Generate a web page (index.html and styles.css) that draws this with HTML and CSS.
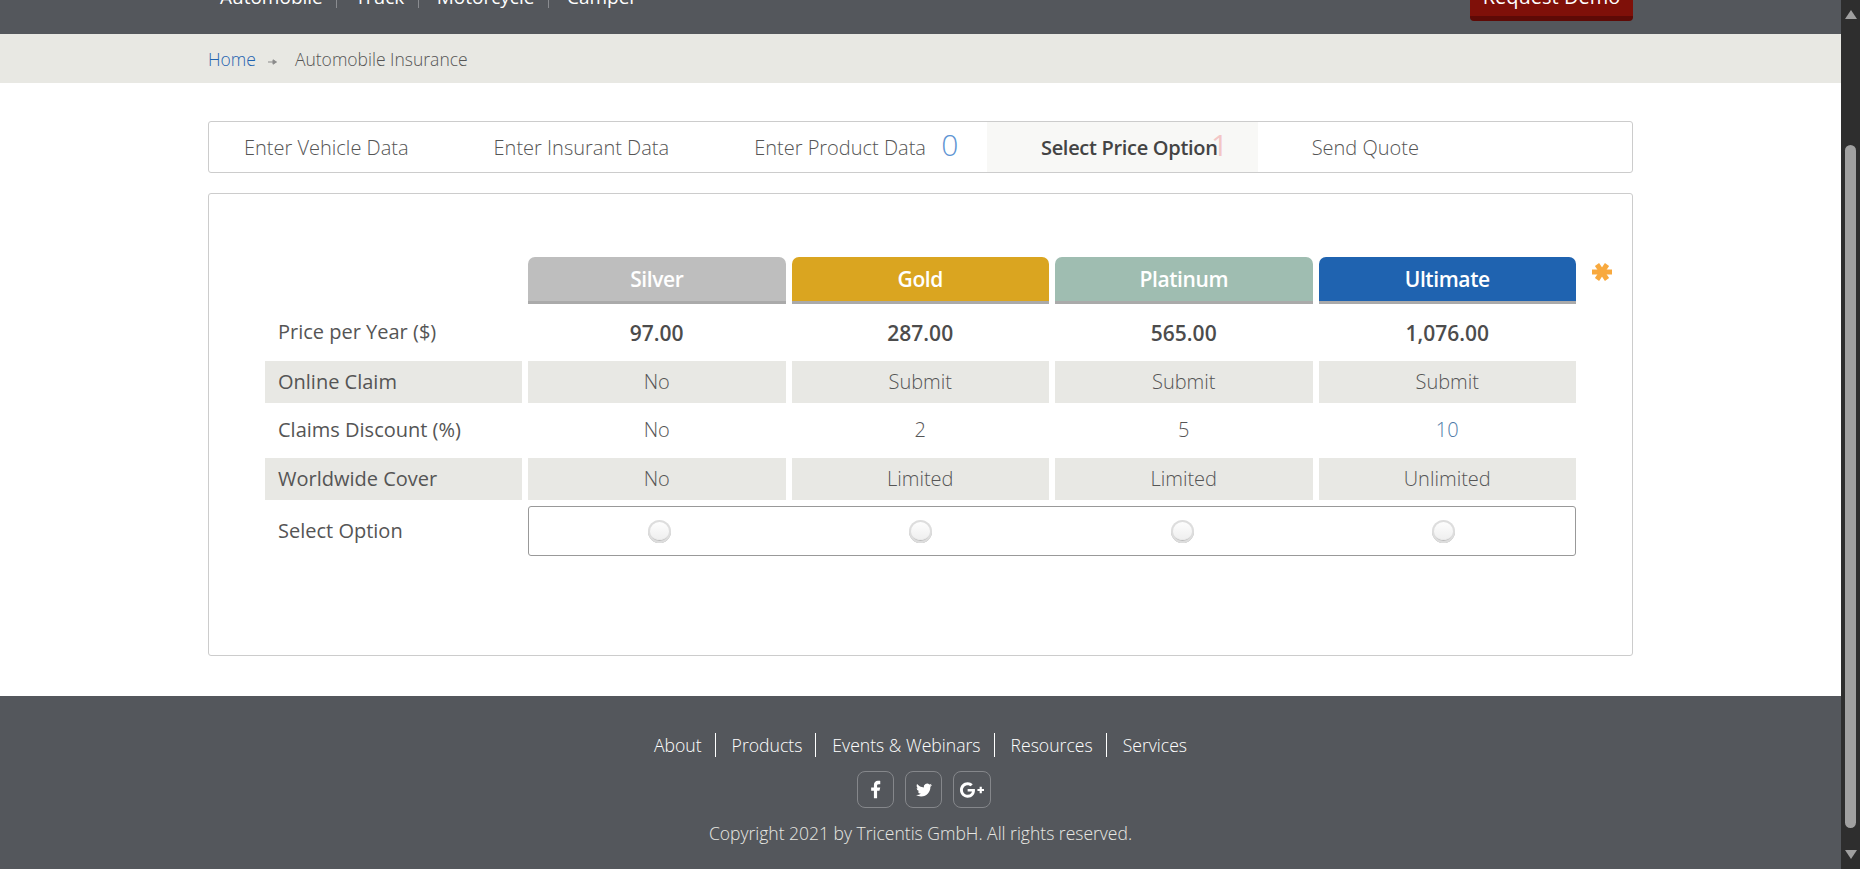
FILE: index.html
```html
<!DOCTYPE html>
<html lang="en">
<head>
  <meta charset="UTF-8" />
  <meta name="viewport" content="width=device-width, initial-scale=1.0" />
  <title>Automobile Insurance</title>
  <link rel="stylesheet" href="styles.css">
</head>
<body>
  <div class="page">
    <header class="topbar">
      <div class="wrap topbar-inner">
        <nav class="topnav">
          <a class="topnav-link">Automobile</a>
          <a class="topnav-link">Truck</a>
          <a class="topnav-link">Motorcycle</a>
          <a class="topnav-link">Camper</a>
        </nav>
        <a class="demo-btn">Request Demo</a>
      </div>
    </header>

    <div class="crumbs">
      <div class="wrap crumbs-inner">
        <a class="crumb-home">Home</a>
        <svg class="crumb-arrow" width="9" height="6" viewBox="0 0 9 6"><path d="M0 3h6.5M5 .8 8.5 3 5 5.2z" fill="#8b8b8b" stroke="#8b8b8b"/></svg>
        <span class="crumb-current">Automobile Insurance</span>
      </div>
    </div>

    <main class="wrap content">
      <div class="tabs">
        <a class="tab tab-vehicle">Enter Vehicle Data</a>
        <a class="tab tab-insurant">Enter Insurant Data</a>
        <a class="tab tab-product">Enter Product Data<span class="count count-zero">0</span></a>
        <a class="tab tab-price">Select Price Option<span class="count count-one">1</span></a>
        <a class="tab tab-send">Send Quote</a>
      </div>

      <section class="panel">
        <div class="plans">
          <div class="plan-blank"></div>
          <div class="plan-head silver">Silver</div>
          <div class="plan-head gold">Gold</div>
          <div class="plan-head platinum">Platinum</div>
          <div class="plan-head ultimate">Ultimate</div>

          <div class="label">Price per Year ($)</div>
          <div class="cell price">97.00</div>
          <div class="cell price">287.00</div>
          <div class="cell price">565.00</div>
          <div class="cell price">1,076.00</div>

          <div class="label shade">Online Claim</div>
          <div class="cell shade">No</div>
          <div class="cell shade">Submit</div>
          <div class="cell shade">Submit</div>
          <div class="cell shade">Submit</div>

          <div class="label">Claims Discount (%)</div>
          <div class="cell">No</div>
          <div class="cell">2</div>
          <div class="cell">5</div>
          <div class="cell link">10</div>

          <div class="label shade">Worldwide Cover</div>
          <div class="cell shade">No</div>
          <div class="cell shade">Limited</div>
          <div class="cell shade">Limited</div>
          <div class="cell shade">Unlimited</div>

          <div class="label">Select Option</div>
          <div class="options">
            <span class="radio"></span>
            <span class="radio"></span>
            <span class="radio"></span>
            <span class="radio"></span>
          </div>
        </div>
        <svg class="required" width="20" height="18" viewBox="0 0 20 18">
          <g stroke="#f8a93e" stroke-width="5">
            <path d="M0 9h20"/>
            <path d="M5 1.5 15 16.500"/>
            <path d="M15 1.500 5 16.500"/>
          </g>
        </svg>
      </section>
    </main>

    <footer class="footer">
      <nav class="footer-nav">
        <a class="footer-link">About</a>
        <a class="footer-link">Products</a>
        <a class="footer-link">Events &amp; Webinars</a>
        <a class="footer-link">Resources</a>
        <a class="footer-link">Services</a>
      </nav>
      <div class="social">
        <a class="social-btn">
          <svg width="19" height="19" viewBox="0 0 24 24" fill="#fff"><path d="M14 13.500h3l1-4h-4v-2c0-1.030 0-2 2-2h2V1.140C17.670 1.100 16.400 1 15.100 1 12 1 10 2.900 10 6.700v2.800H6.500v4H10V23h4z"/></svg>
        </a>
        <a class="social-btn">
          <svg width="16" height="16" viewBox="0 0 24 24" fill="#fff"><path d="M23.953 4.570a10 10 0 0 1-2.825.775 4.958 4.958 0 0 0 2.163-2.723c-.951.555-2.005.959-3.127 1.184a4.920 4.920 0 0 0-8.384 4.482C7.690 8.095 4.067 6.130 1.640 3.162a4.822 4.822 0 0 0-.666 2.475c0 1.710.870 3.213 2.188 4.096a4.904 4.904 0 0 1-2.228-.616v.060a4.923 4.923 0 0 0 3.946 4.827 4.996 4.996 0 0 1-2.212.085 4.936 4.936 0 0 0 4.604 3.417 9.867 9.867 0 0 1-6.102 2.105c-.390 0-.779-.023-1.170-.067a13.995 13.995 0 0 0 7.557 2.209c9.053 0 13.998-7.496 13.998-13.985 0-.210 0-.420-.015-.630A9.935 9.935 0 0 0 24 4.590z"/></svg>
        </a>
        <a class="social-btn social-btn-wide">
          <svg width="24" height="24" viewBox="0 0 24 24" fill="#fff"><path d="M7.635 10.909v2.619h4.335c-.173 1.125-1.310 3.295-4.331 3.295-2.604 0-4.731-2.160-4.731-4.823 0-2.662 2.122-4.822 4.728-4.822 1.485 0 2.479.633 3.045 1.178l2.073-1.994c-1.330-1.245-3.056-1.995-5.115-1.995C3.412 4.365 0 7.785 0 12s3.414 7.635 7.635 7.635c4.410 0 7.332-3.098 7.332-7.461 0-.501-.054-.885-.120-1.265H7.635zm16.365 0h-2.183V8.726h-2.183v2.183h-2.182v2.181h2.184v2.184h2.189V13.090H24"/></svg>
        </a>
      </div>
      <p class="copyright">Copyright 2021 by Tricentis GmbH. All rights reserved.</p>
    </footer>
  </div>

  <div class="scrollbar">
    <span class="scroll-up"></span>
    <span class="scroll-thumb"></span>
    <span class="scroll-down"></span>
  </div>
</body>
</html>
```

FILE: styles.css
```css
* {
  box-sizing: border-box;
}
html, body {
  height: 100%;
}
body {
  margin: 0;
  display: flex;
  overflow: hidden;
  font-family: "Open Sans", "Liberation Sans", sans-serif;
  color: #555;
  background: #fff;
}
.page {
  flex: 1;
  min-width: 0;
}
.wrap {
  width: 1425px;
  margin: 0 auto;
}

/* top bar, scrolled partly out of view */
.topbar {
  height: 34px;
  overflow: hidden;
  background: #54575c;
}
.topbar-inner {
  display: flex;
  justify-content: space-between;
  align-items: flex-start;
  margin-top: -21px;
}
.topnav {
  display: flex;
  margin-top: 8px;
}
.topnav-link {
  padding: 0 13.5px 0 18px;
  border-right: 1px solid #8a8c90;
  font-size: 19px;
  line-height: 21px;
  color: #fff;
}
.topnav-link:first-child {
  padding-left: 12px;
}
.topnav-link:last-child {
  border-right: none;
}
.demo-btn {
  width: 163px;
  height: 42px;
  padding-top: 6px;
  border-bottom: 5px solid #5e0a06;
  border-radius: 0 0 4px 4px;
  background: #7f1009;
  font-size: 20px;
  line-height: 24px;
  text-align: center;
  color: #fff;
}

.crumbs {
  height: 49px;
  background: #e8e8e3;
}
.crumbs-inner {
  display: flex;
  align-items: center;
  height: 100%;
  font-size: 17.5px;
  font-weight: 300;
}
.crumb-home {
  color: #1f63b0;
}
.crumb-arrow {
  margin: 6px 18px 0 12px;
}

.content {
  padding-top: 38px;
}

/* wizard tabs */
.tabs {
  display: flex;
  height: 52px;
  border: 1px solid #ccc;
  border-radius: 3px;
  font-size: 20px;
  font-weight: 300;
}
.tab {
  position: relative;
  display: flex;
  align-items: center;
  padding: 0 36px 0 49px;
}
.tab-vehicle {
  padding-left: 35px;
}
.tab-product {
  padding: 0 61px 0 49px;
}
.tab-price {
  padding: 0 40px 0 54px;
  background: #f8f8f6;
  font-weight: 600;
  letter-spacing: -0.3px;
  color: #444;
}
.tab-send {
  padding-left: 54px;
}
.count {
  position: absolute;
  top: 2px;
  font-size: 30px;
  font-weight: 300;
}
.count-zero {
  left: 236px;
  color: #5f95d3;
}
.count-one {
  left: 224px;
  font-weight: 400;
  color: #f3c6c6;
}

/* price table */
.panel {
  display: flex;
  align-items: flex-start;
  gap: 16px;
  margin-top: 20px;
  padding: 63px 20px 99px 56px;
  border: 1px solid #ccc;
  border-radius: 3px;
}
.plans {
  flex: 1;
  display: grid;
  grid-template-columns: 257px repeat(4, 1fr);
  grid-template-rows: 47px 45px 42px 43px 42px 50px;
  gap: 6px;
  font-size: 20px;
}
.plan-head {
  display: flex;
  align-items: center;
  justify-content: center;
  border-bottom: 3px solid #aaa;
  border-radius: 7px 7px 0 0;
  font-size: 21px;
  font-weight: 600;
  letter-spacing: -0.4px;
  color: #fff;
}
.silver {
  background: #bebebe;
}
.gold {
  background: #daa520;
}
.platinum {
  background: #9fbdb1;
}
.ultimate {
  background: #1f63b0;
}
.label {
  display: flex;
  align-items: center;
  padding: 0 0 2px 13px;
}
.cell {
  display: flex;
  align-items: center;
  justify-content: center;
  padding-bottom: 2px;
  font-weight: 300;
}
.price {
  padding-bottom: 0;
  font-size: 21px;
  font-weight: 600;
  color: #4c4c4c;
}
.shade {
  background: #e8e8e4;
}
.link {
  color: #4f7ba8;
}
.options {
  grid-column: 2 / 6;
  display: grid;
  grid-template-columns: repeat(4, 1fr);
  align-items: center;
  justify-items: center;
  padding-right: 1px;
  border: 1px solid #999;
  border-radius: 3px;
}
.radio {
  width: 23px;
  height: 23px;
  border-radius: 50%;
  background: linear-gradient(#fff, #ececec);
  box-shadow: inset 0 0 0 2px #ddd, inset 0 -3px 1px #b5b5b5;
}
.required {
  margin-top: 6px;
  flex: none;
}

.footer {
  height: 173px;
  margin-top: 40px;
  padding-top: 37px;
  background: #54575c;
  text-align: center;
  color: #fff;
}
.footer-nav {
  display: flex;
  justify-content: center;
  font-size: 17.6px;
  font-weight: 300;
}
.footer-link {
  padding: 0 13px 0 16px;
  border-right: 1px solid #fff;
  line-height: 24px;
}
.footer-link:first-child {
  padding-left: 0;
}
.footer-link:last-child {
  padding-right: 0;
  border-right: none;
}
.social {
  display: flex;
  justify-content: center;
  gap: 11px;
  margin: 14px 0 0 7px;
}
.social-btn {
  display: flex;
  align-items: center;
  justify-content: center;
  width: 37px;
  height: 37px;
  border: 1px solid #85878b;
  border-radius: 8px;
}
.social-btn-wide {
  width: 38px;
}
.copyright {
  margin: 13px 0 0;
  font-size: 17.5px;
  font-weight: 300;
  color: #e8e8e3;
}

/* window scrollbar */
.scrollbar {
  flex: none;
  display: flex;
  flex-direction: column;
  align-items: center;
  width: 19px;
  padding: 10px 0;
  background: #2e2e2e;
}
.scroll-up,
.scroll-down {
  width: 0;
  height: 0;
  border-left: 6px solid transparent;
  border-right: 6px solid transparent;
}
.scroll-up {
  border-bottom: 9px solid #a0a0a0;
}
.scroll-down {
  border-top: 9px solid #a0a0a0;
}
.scroll-thumb {
  width: 11px;
  height: 684px;
  margin: 126px 0 22px;
  border-radius: 6px;
  background: #a0a0a0;
}
```
